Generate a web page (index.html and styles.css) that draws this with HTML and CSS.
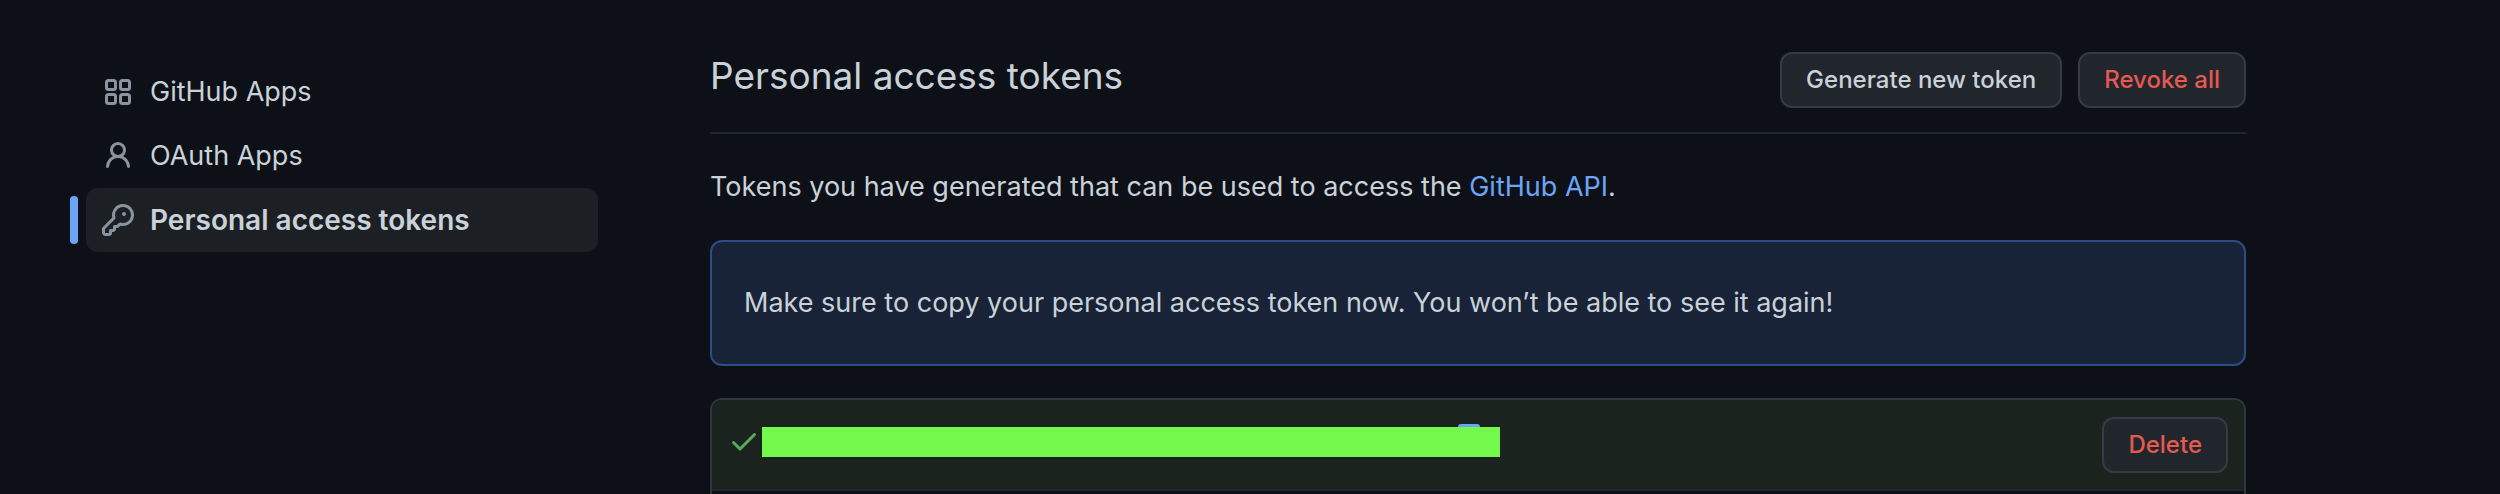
FILE: index.html
```html
<!DOCTYPE html>
<html lang="en">
<head>
    <meta charset="UTF-8">
    <meta name="viewport" content="width=device-width, initial-scale=1.0">
    <title>Personal access tokens</title>
    <link rel="stylesheet" href="styles.css">
</head>
<body>
    <div class="page">
        <nav class="sidebar" aria-label="Developer settings">
            <a class="nav-item" href="#apps">
                <svg class="icon" viewBox="0 0 16 16" aria-hidden="true">
                    <g fill="none" stroke="currentColor" stroke-width="1.5">
                        <rect x="2.25" y="2.25" width="4.5" height="4.5" rx="1"/>
                        <rect x="9.25" y="2.25" width="4.5" height="4.5" rx="1"/>
                        <rect x="2.25" y="9.25" width="4.5" height="4.5" rx="1"/>
                        <rect x="9.25" y="9.25" width="4.5" height="4.5" rx="1"/>
                    </g>
                </svg>
                <span>GitHub Apps</span>
            </a>
            <a class="nav-item" href="#oauth">
                <svg class="icon" viewBox="0 0 16 16" aria-hidden="true">
                    <path fill="currentColor" fill-rule="evenodd" d="M10.5 5a2.5 2.5 0 11-5 0 2.5 2.5 0 015 0zm.061 3.073a4 4 0 10-5.123 0 6.004 6.004 0 00-3.431 5.142.75.75 0 001.498.07 4.5 4.5 0 018.99 0 .75.75 0 101.498-.07 6.005 6.005 0 00-3.432-5.142z"/>
                </svg>
                <span>OAuth Apps</span>
            </a>
            <a class="nav-item active" href="#tokens" aria-current="page">
                <svg class="icon" viewBox="0 0 16 16" aria-hidden="true">
                    <path fill="currentColor" fill-rule="evenodd" d="M6.5 5.5a4 4 0 112.731 3.795.75.75 0 00-.768.18L7.44 10.5H6.25a.75.75 0 00-.75.75v1.19l-.06.06H4.25a.75.75 0 00-.75.75v1.19l-.06.06H1.75a.25.25 0 01-.25-.25v-1.69l5.024-5.023a.75.75 0 00.181-.768A3.995 3.995 0 016.5 5.5zm4-5.5a5.5 5.5 0 00-5.348 6.788L.22 11.72a.75.75 0 00-.22.53v2C0 15.216.784 16 1.75 16h2a.75.75 0 00.53-.22l.5-.5a.75.75 0 00.22-.53V14h.75a.75.75 0 00.53-.22l.5-.5a.75.75 0 00.22-.53V12h.75a.75.75 0 00.53-.22l.932-.932A5.5 5.5 0 1010.5 0zm.5 6a1 1 0 100-2 1 1 0 000 2z"/>
                </svg>
                <span>Personal access tokens</span>
            </a>
        </nav>

        <main class="content">
            <header class="subhead">
                <h1>Personal access tokens</h1>
                <div class="actions">
                    <button class="btn" type="button">Generate new token</button>
                    <button class="btn btn-danger" type="button">Revoke all</button>
                </div>
            </header>
            <p class="intro">Tokens you have generated that can be used to access the <a href="#api">GitHub API</a>.</p>
            <div class="flash">Make sure to copy your personal access token now. You won’t be able to see it again!</div>
            <div class="token-list">
                <div class="token-row">
                    <svg class="icon check" viewBox="0 0 16 16" aria-hidden="true">
                        <path fill="currentColor" fill-rule="evenodd" d="M13.78 4.22a.75.75 0 010 1.06l-7.25 7.25a.75.75 0 01-1.06 0L2.22 9.28a.75.75 0 011.06-1.06L6 10.94l6.72-6.72a.75.75 0 011.06 0z"/>
                    </svg>
                    <div class="token-value">
                        <span class="copy-tab"></span>
                    </div>
                    <button class="btn btn-danger" type="button">Delete</button>
                </div>
            </div>
        </main>
    </div>
</body>
</html>
```
FILE: styles.css
```css
* {
    box-sizing: border-box;
}
body {
    margin: 0;
    background-color: #0d1117;
    color: #c9d1d9;
    font-family: Inter, "Liberation Sans", sans-serif;
    font-size: 27px;
    line-height: 42px;
}
a {
    color: #6ca4f8;
    text-decoration: none;
}
.page {
    display: grid;
    grid-template-columns: 512px minmax(0, 1fr);
    column-gap: 112px;
    min-height: 100vh;
    padding: 0 254px 0 86px;
}
.sidebar {
    padding-top: 60px;
}
.nav-item {
    position: relative;
    display: flex;
    align-items: center;
    gap: 16px;
    height: 64px;
    padding: 0 16px;
    border-radius: 12px;
    color: #c9d1d9;
}
.nav-item.active {
    background-color: #1c2024;
    font-size: 28px;
    font-weight: 600;
}
.nav-item.active::before {
    content: "";
    position: absolute;
    top: 8px;
    left: -16px;
    width: 8px;
    height: 48px;
    border-radius: 4px;
    background-color: #6ca4f8;
}
.icon {
    flex-shrink: 0;
    width: 32px;
    height: 32px;
    color: #8b949e;
}
.content {
    display: flex;
    flex-direction: column;
    padding-top: 44px;
}
.subhead {
    display: flex;
    justify-content: space-between;
    padding-bottom: 24px;
    border-bottom: 2px solid #21262d;
}
.subhead h1 {
    margin: 0;
    font-size: 37px;
    font-weight: 400;
    line-height: 64px;
}
.actions {
    display: flex;
    gap: 16px;
    padding-top: 8px;
}
.btn {
    height: 56px;
    padding: 0 24px;
    border: 2px solid #363b42;
    border-radius: 12px;
    background-color: #21262d;
    color: #c9d1d9;
    font-family: inherit;
    font-size: 24px;
    font-weight: 500;
    line-height: 40px;
    cursor: pointer;
}
.btn-danger {
    color: #e5594f;
}
.intro {
    margin: 32px 0;
}
.flash {
    padding: 40px 32px;
    border: 2px solid #2c4c85;
    border-radius: 12px;
    background-color: #182337;
}
.token-list {
    flex: 1;
    margin-top: 32px;
    border: 2px solid #30363d;
    border-bottom: 0;
    border-radius: 12px 12px 0 0;
}
.token-row {
    display: flex;
    align-items: flex-start;
    padding: 17px 16px 16px;
    border-bottom: 2px solid #21262d;
    border-radius: 10px 10px 0 0;
    background-color: #1b231f;
}
.check {
    margin-top: 8px;
    color: #57ab5a;
}
.token-value {
    position: relative;
    width: 738px;
    height: 30px;
    margin: 10px auto 0 2px;
    background-color: #73f84b;
}
.copy-tab {
    position: absolute;
    top: -3px;
    right: 20px;
    width: 22px;
    height: 3px;
    border-radius: 3px 3px 0 0;
    background-color: #6ca4f8;
}
```
